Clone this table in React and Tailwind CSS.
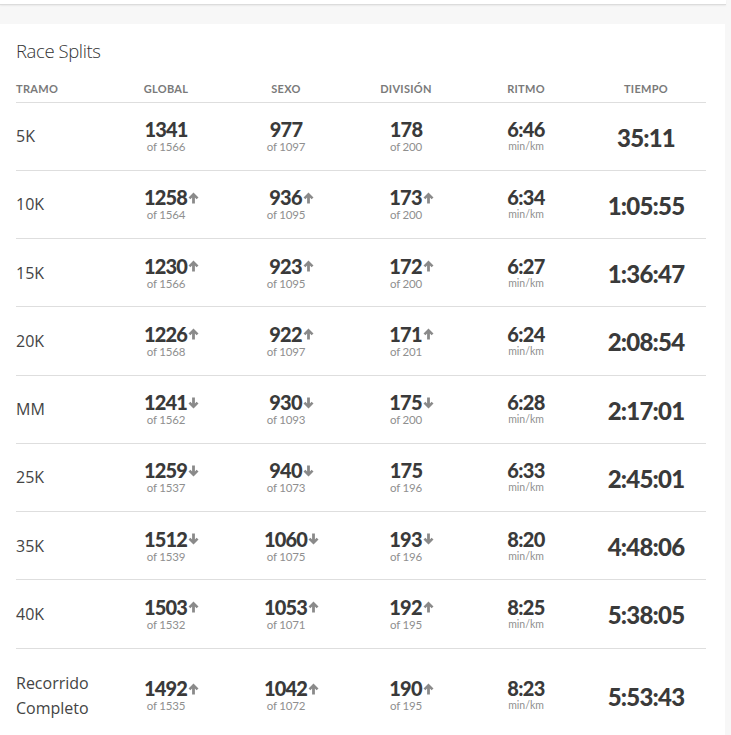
const splits = [
  { tramo: "5K", g: ["1341", "1566", null], s: ["977", "1097", null], d: ["178", "200", null], ritmo: "6:46", tiempo: "35:11" },
  { tramo: "10K", g: ["1258", "1564", "up"], s: ["936", "1095", "up"], d: ["173", "200", "up"], ritmo: "6:34", tiempo: "1:05:55" },
  { tramo: "15K", g: ["1230", "1566", "up"], s: ["923", "1095", "up"], d: ["172", "200", "up"], ritmo: "6:27", tiempo: "1:36:47" },
  { tramo: "20K", g: ["1226", "1568", "up"], s: ["922", "1097", "up"], d: ["171", "201", "up"], ritmo: "6:24", tiempo: "2:08:54" },
  { tramo: "MM", g: ["1241", "1562", "down"], s: ["930", "1093", "down"], d: ["175", "200", "down"], ritmo: "6:28", tiempo: "2:17:01" },
  { tramo: "25K", g: ["1259", "1537", "down"], s: ["940", "1073", "down"], d: ["175", "196", null], ritmo: "6:33", tiempo: "2:45:01" },
  { tramo: "35K", g: ["1512", "1539", "down"], s: ["1060", "1075", "down"], d: ["193", "196", "down"], ritmo: "8:20", tiempo: "4:48:06" },
  { tramo: "40K", g: ["1503", "1532", "up"], s: ["1053", "1071", "up"], d: ["192", "195", "up"], ritmo: "8:25", tiempo: "5:38:05" },
  { tramo: "Recorrido Completo", g: ["1492", "1535", "up"], s: ["1042", "1072", "up"], d: ["190", "195", "up"], ritmo: "8:23", tiempo: "5:53:43" },
];

// flecha gruesa gris junto a la posición
const Arrow = ({ dir }) => (
  <svg width="11" height="12" viewBox="0 0 11 12" className="ml-px">
    {dir === "up" ? (
      <path d="M5.5 0.5 L10.5 5.6 L8.6 7.3 L6.9 5.5 L6.9 11.5 L4.1 11.5 L4.1 5.5 L2.4 7.3 L0.5 5.6 Z" fill="#8a8a8a" />
    ) : (
      <path d="M5.5 11.5 L10.5 6.4 L8.6 4.7 L6.9 6.5 L6.9 0.5 L4.1 0.5 L4.1 6.5 L2.4 4.7 L0.5 6.4 Z" fill="#8a8a8a" />
    )}
  </svg>
);

const Place = ({ data }) => {
  const [pos, total, dir] = data;
  return (
    <div className="flex flex-col items-center">
      <div className="flex items-center h-[21px]">
        <span className={"text-[20px] font-black text-[#3a3a3a] tracking-[-0.8px] leading-[21px] " + (dir ? "pl-[11px]" : "")}>{pos}</span>
        {dir ? <Arrow dir={dir} /> : null}
      </div>
      <div className="text-[11.5px] text-[#8f8f8f] leading-[13px] tracking-[-0.2px]">of {total}</div>
    </div>
  );
};

export default function App() {
  return (
    <div className="min-h-[735px] bg-[#f7f7f7] font-['Lato',sans-serif] overflow-hidden">
      <div className="h-[5px] w-[726px] bg-white border-b border-[#dcdcdc] shadow-[0_1px_2px_rgba(0,0,0,0.06)]" />
      <div className="mt-[19px] w-[725px] bg-white pl-4 pr-[19px] pt-[15px] pb-4">
        <h2 className="text-[18.5px] font-light text-[#333] tracking-[-0.4px] leading-6 font-['Open_Sans',sans-serif]">Race Splits</h2>
        <table className="w-[690px] mt-[18px] border-collapse">
          <thead>
            <tr className="border-b border-[#dedede] text-[11px] font-bold text-[#7a7a7a] tracking-[0.3px]">
              <th className="w-[90px] text-left font-bold pb-[4px]">TRAMO</th>
              <th className="w-[120px] font-bold pb-[4px]">GLOBAL</th>
              <th className="w-[120px] font-bold pb-[4px]">SEXO</th>
              <th className="w-[120px] font-bold pb-[4px]">DIVISIÓN</th>
              <th className="w-[120px] font-bold pb-[4px]">RITMO</th>
              <th className="w-[120px] font-bold pb-[4px]">TIEMPO</th>
            </tr>
          </thead>
          <tbody>
            {splits.map((r, i) => (
              <tr key={r.tramo} className={(i < splits.length - 1 ? "border-b border-[#dedede] h-[68.25px]" : "h-[94px]") + " text-center"}>
                <td className="text-left text-[16px] text-[#444] leading-[25px] font-['Open_Sans',sans-serif] pt-px">
                  {r.tramo === "Recorrido Completo" ? (
                    <>
                      Recorrido
                      <br />
                      Completo
                    </>
                  ) : (
                    r.tramo
                  )}
                </td>
                <td><Place data={r.g} /></td>
                <td><Place data={r.s} /></td>
                <td><Place data={r.d} /></td>
                <td>
                  <div className="flex flex-col items-center">
                    <div className="text-[20px] font-black text-[#3a3a3a] leading-[21px] tracking-[-0.6px]">{r.ritmo}</div>
                    <div className="text-[10.5px] text-[#8f8f8f] leading-[13px]">min/km</div>
                  </div>
                </td>
                <td className="text-[24px] font-black text-[#3a3a3a] tracking-[-0.8px] pt-[3px]">{r.tiempo}</td>
              </tr>
            ))}
          </tbody>
        </table>
      </div>
    </div>
  );
}
